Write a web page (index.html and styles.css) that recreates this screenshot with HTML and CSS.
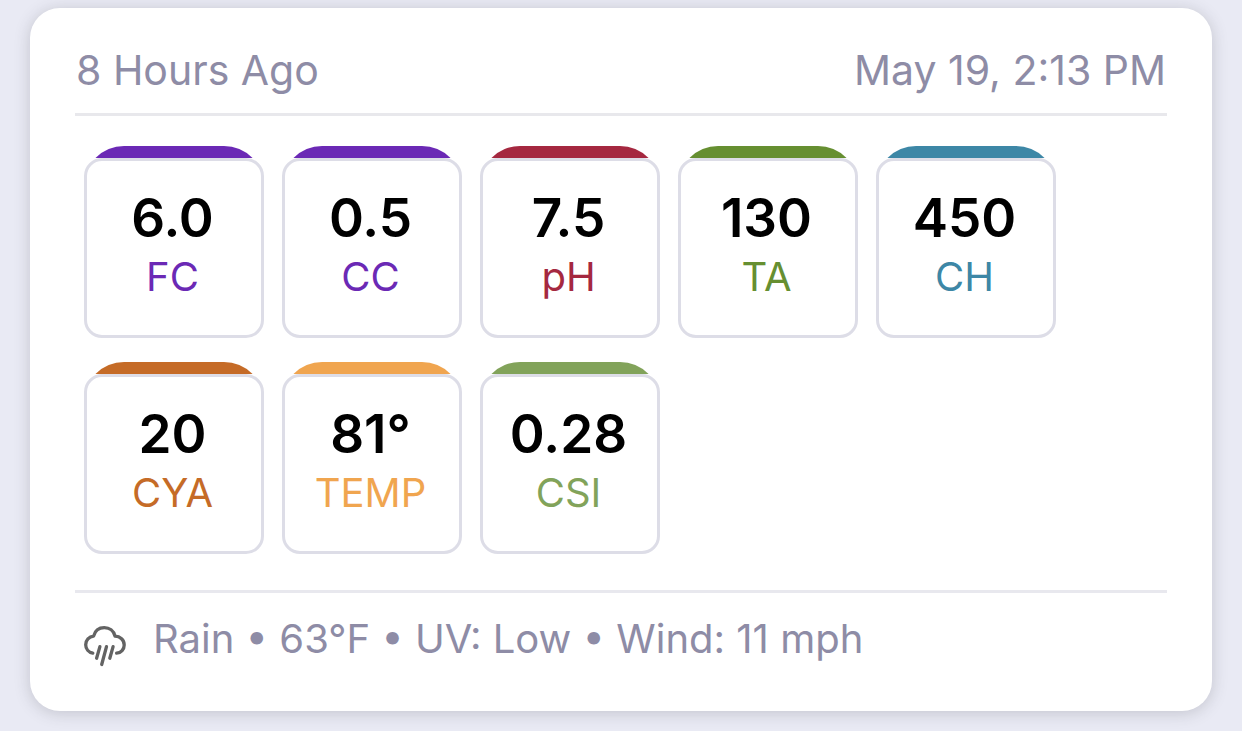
FILE: index.html
```html
<!DOCTYPE html>
<html lang="en">
<head>
<meta charset="utf-8">
<meta name="viewport" content="width=device-width, initial-scale=1">
<title>Pool Test Log</title>
<link rel="stylesheet" href="styles.css">
</head>
<body>
<article class="card">
  <header class="card-header">
    <span>8 Hours Ago</span>
    <time>May 19, 2:13 PM</time>
  </header>
  <ul class="readings">
    <li class="tile purple"><div class="tile-box"><span class="value">6.0</span><span class="label">FC</span></div></li>
    <li class="tile purple"><div class="tile-box"><span class="value">0.5</span><span class="label">CC</span></div></li>
    <li class="tile crimson"><div class="tile-box"><span class="value">7.5</span><span class="label">pH</span></div></li>
    <li class="tile green"><div class="tile-box"><span class="value">130</span><span class="label">TA</span></div></li>
    <li class="tile blue"><div class="tile-box"><span class="value">450</span><span class="label">CH</span></div></li>
    <li class="tile rust"><div class="tile-box"><span class="value">20</span><span class="label">CYA</span></div></li>
    <li class="tile orange"><div class="tile-box"><span class="value">81°</span><span class="label">TEMP</span></div></li>
    <li class="tile sage"><div class="tile-box"><span class="value">0.28</span><span class="label">CSI</span></div></li>
  </ul>
  <footer class="weather">
    <svg class="weather-icon" viewBox="0 0 42 42" aria-hidden="true">
      <path d="M8.8 28.2C4.600 27.400 1.700 23.900 1.700 19.800C1.700 15.200 5 11.600 9.600 11.100C11 5.800 15.200 2.700 20.300 2.700C25.400 2.700 29.700 5.800 31 11.100C36.200 11.300 40.200 15.100 40.200 19.900C40.200 24.300 37.100 27.900 32.600 28.200"/>
      <path d="M15.900 21.600L12.600 33.200M22.500 21.600L17.700 39.500M29.100 21.600L25.800 33.200"/>
    </svg>
    <span>Rain • 63°F • UV: Low • Wind: 11 mph</span>
  </footer>
</article>
</body>
</html>
```
FILE: styles.css
```css
* {
  box-sizing: border-box;
}

body {
  margin: 0;
  padding: 8px 30px 21px;
  background: #e9eaf4;
  color: #8e8ca6;
  font-family: Inter, "Liberation Sans", sans-serif;
  font-size: 40px;
  line-height: 48px;
}

.card {
  padding: 0 45px 44px;
  border-radius: 30px;
  background: #fff;
  box-shadow: 0 2px 16px rgba(60, 60, 70, 0.22);
}

.card-header {
  display: flex;
  flex-wrap: wrap;
  justify-content: space-between;
  padding: 38px 1px 19px;
  border-bottom: 3px solid #e8e8ec;
  font-size: 41px;
}

.readings {
  display: grid;
  grid-template-columns: repeat(auto-fill, 180px);
  gap: 24px 18px;
  margin: 0;
  padding: 30px 9px 36px;
  list-style: none;
}

.tile {
  padding-top: 12px;
  border-radius: 40px 40px 18px 18px;
  background: linear-gradient(var(--accent), var(--accent)) no-repeat top / 100% 12px;
}

.tile-box {
  display: flex;
  flex-direction: column;
  align-items: center;
  height: 180px;
  padding: 26px 3px 0 0;
  border: 3px solid #dddde7;
  border-radius: 18px;
  background: #fff;
}

.value {
  color: #000;
  font-size: 53px;
  font-weight: 600;
  line-height: 62px;
}

.label {
  color: var(--accent);
  line-height: 56px;
}

.purple { --accent: #6b29b5; }
.crimson { --accent: #a52840; }
.green { --accent: #668f31; }
.blue { --accent: #3d87a6; }
.rust { --accent: #c56b27; }
.orange { --accent: #f0a54f; }
.sage { --accent: #82a35a; }

.weather {
  display: flex;
  align-items: flex-start;
  gap: 27px;
  padding: 22px 9px 0;
  border-top: 3px solid #e8e8ee;
}

.weather-icon {
  flex: none;
  width: 42px;
  height: 42px;
  margin-top: 10px;
  fill: none;
  stroke: #636363;
  stroke-width: 3.3;
  stroke-linecap: round;
  stroke-linejoin: round;
}
```
